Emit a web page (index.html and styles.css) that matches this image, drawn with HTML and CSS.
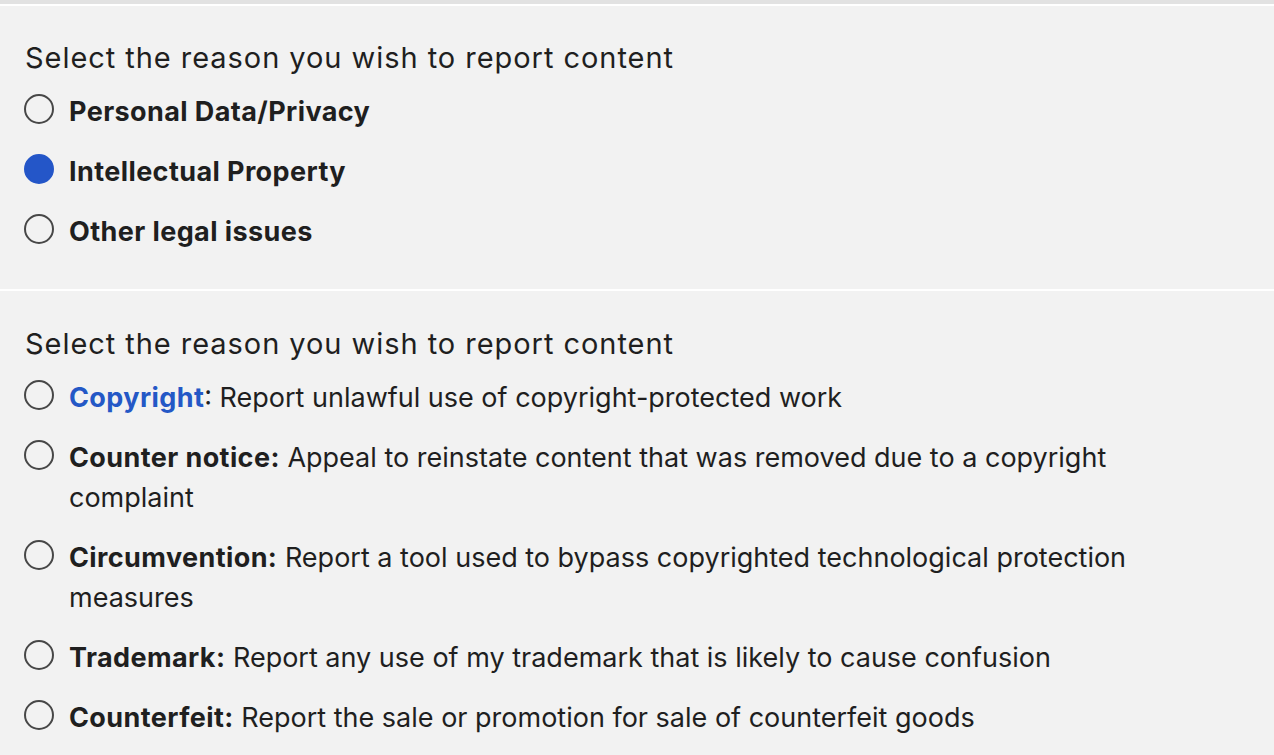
FILE: index.html
```html
<!DOCTYPE html>
<html lang="en">
<head>
<meta charset="utf-8">
<title>Report content</title>
<link rel="stylesheet" href="styles.css">
</head>
<body>
<div class="topbar"></div>
<section class="panel panel-first">
  <h2 class="heading">Select the reason you wish to report content</h2>
  <ul class="options">
    <li class="option"><span class="radio"></span><span class="label"><b>Personal Data/Privacy</b></span></li>
    <li class="option"><span class="radio radio-on"></span><span class="label"><b>Intellectual Property</b></span></li>
    <li class="option"><span class="radio"></span><span class="label"><b>Other legal issues</b></span></li>
  </ul>
</section>
<section class="panel panel-second">
  <h2 class="heading">Select the reason you wish to report content</h2>
  <ul class="options">
    <li class="option"><span class="radio"></span><span class="label"><b class="link">Copyright</b>: Report unlawful use of copyright-protected work</span></li>
    <li class="option"><span class="radio"></span><span class="label"><b>Counter notice:</b> Appeal to reinstate content that was removed due to a copyright complaint</span></li>
    <li class="option"><span class="radio"></span><span class="label"><b>Circumvention:</b> Report a tool used to bypass copyrighted technological protection measures</span></li>
    <li class="option"><span class="radio"></span><span class="label"><b>Trademark:</b> Report any use of my trademark that is likely to cause confusion</span></li>
    <li class="option"><span class="radio"></span><span class="label"><b>Counterfeit:</b> Report the sale or promotion for sale of counterfeit goods</span></li>
  </ul>
</section>
</body>
</html>
```

FILE: styles.css
```css
html, body {
  margin: 0;
  padding: 0;
}
body {
  background: #f2f2f2;
  font-family: Inter, "Open Sans", sans-serif;
  color: #1f1f1f;
  width: 1274px;
  height: 755px;
  overflow: hidden;
}
.topbar {
  height: 4px;
  background: #e2e2e2;
  border-bottom: 2px solid #ffffff;
}
.panel {
  background: #f2f2f2;
  padding: 32px 100px 37px 24px;
}
.panel-second {
  border-top: 2px solid #ffffff;
  padding-top: 33px;
}
.heading {
  margin: 0 0 14px 1px;
  font-size: 29px;
  line-height: 40px;
  font-weight: 400;
  letter-spacing: 0.95px;
  color: #1f1f1f;
}
.options {
  list-style: none;
  margin: 0;
  padding: 0;
  display: flex;
  flex-direction: column;
  gap: 20px;
}
.option {
  display: flex;
  align-items: flex-start;
  gap: 15px;
  font-size: 27px;
  line-height: 40px;
}
.radio {
  flex: none;
  width: 26px;
  height: 26px;
  margin-top: 2px;
  border: 2px solid #474747;
  border-radius: 50%;
  box-sizing: content-box;
}
.radio-on {
  background: #2456c8;
  border-color: #2456c8;
}
.label b {
  font-weight: 700;
  letter-spacing: 0.4px;
}
.link {
  color: #2458c6;
}
```
